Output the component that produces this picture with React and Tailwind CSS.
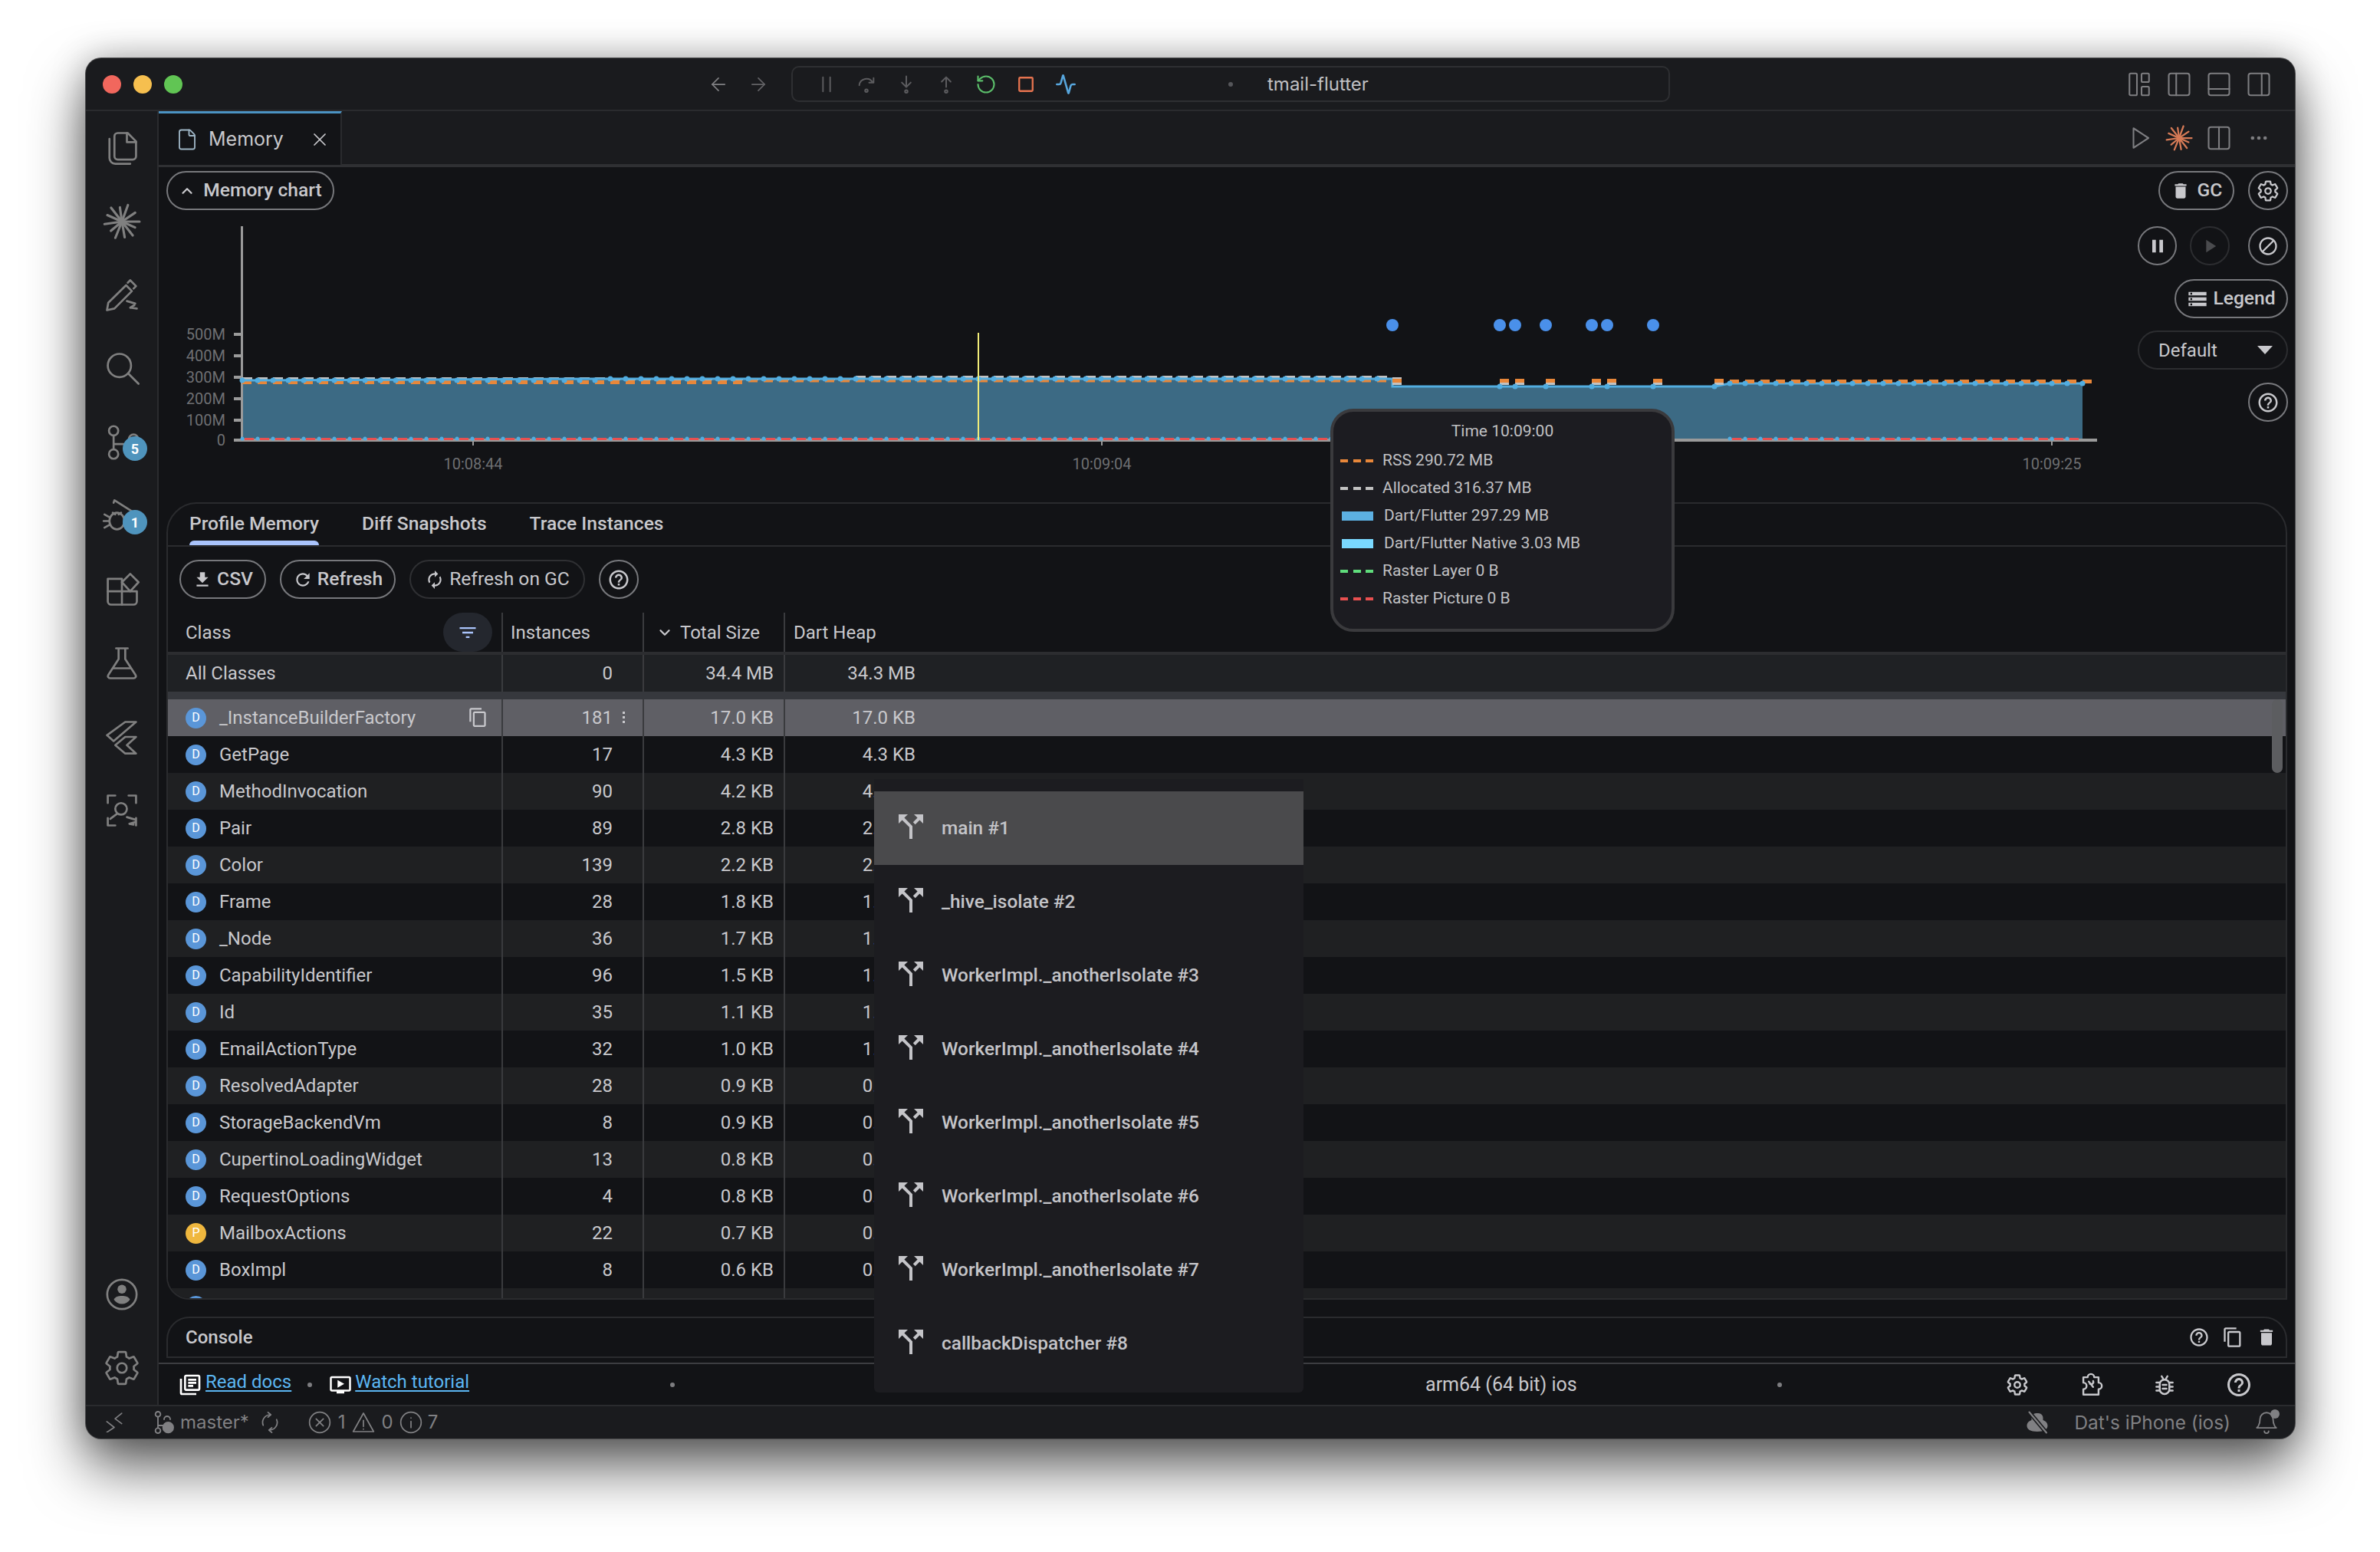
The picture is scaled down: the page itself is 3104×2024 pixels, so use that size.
import React from 'react';
import { ArrowLeft, ArrowRight, X, File, Activity, Ellipsis, ChevronUp, ChevronDown, RotateCcw } from 'lucide-react';

const HELP = "M11 18h2v-2h-2v2zm1-16C6.48 2 2 6.48 2 12s4.48 10 10 10 10-4.48 10-10S17.52 2 12 2zm0 18c-4.41 0-8-3.59-8-8s3.59-8 8-8 8 3.59 8 8-3.59 8-8 8zm0-14c-2.21 0-4 1.79-4 4h2c0-1.1.9-2 2-2s2 .9 2 2c0 2-3 1.75-3 5h2c0-2.25 3-2.5 3-5 0-2.21-1.79-4-4-4z";
const TRASH = "M6 19c0 1.1.9 2 2 2h8c1.1 0 2-.9 2-2V7H6v12zM19 4h-3.5l-1-1h-5l-1 1H5v2h14V4z";
const COPY = "M16 1H4c-1.1 0-2 .9-2 2v14h2V3h12V1zm3 4H8c-1.1 0-2 .9-2 2v14c0 1.1.9 2 2 2h11c1.1 0 2-.9 2-2V7c0-1.1-.9-2-2-2zm0 16H8V7h11v14z";
const STORAGE = "M2 20h20v-4H2v4zm2-3h2v2H4v-2zM2 4v4h20V4H2zm4 3H4V5h2v2zm-4 7h20v-4H2v4zm2-3h2v2H4v-2z";
const BLOCK = "M12 2C6.48 2 2 6.48 2 12s4.48 10 10 10 10-4.48 10-10S17.52 2 12 2zM4 12c0-4.42 3.58-8 8-8 1.85 0 3.55.63 4.9 1.69L5.69 16.9C4.63 15.55 4 13.85 4 12zm8 8c-1.85 0-3.55-.63-4.9-1.69L18.31 7.1C19.37 8.45 20 10.15 20 12c0 4.42-3.58 8-8 8z";
const PAUSE = "M6 19h4V5H6v14zm8-14v14h4V5h-4z";
const PLAY = "M8 5v14l11-7z";
const REFRESH = "M17.65 6.35C16.2 4.9 14.21 4 12 4c-4.42 0-7.99 3.58-7.99 8s3.57 8 7.99 8c3.73 0 6.84-2.55 7.73-6h-2.08c-.82 2.33-3.04 4-5.65 4-3.31 0-6-2.69-6-6s2.69-6 6-6c1.66 0 3.14.69 4.22 1.78L13 11h7V4l-2.35 2.35z";
const AUTORENEW = "M12 6v3l4-4-4-4v3c-4.42 0-8 3.58-8 8 0 1.57.46 3.03 1.24 4.26L6.7 14.8c-.45-.83-.7-1.79-.7-2.8 0-3.31 2.69-6 6-6zm6.76 1.74L17.3 9.2c.44.84.7 1.79.7 2.8 0 3.31-2.69 6-6 6v-3l-4 4 4 4v-3c4.42 0 8-3.58 8-8 0-1.57-.46-3.03-1.24-4.26z";
const DOWNLOAD = "M19 9h-4V3H9v6H5l7 7 7-7zM5 18v2h14v-2H5z";
const FILTER = "M10 18h4v-2h-4v2zM3 6v2h18V6H3zm3 7h12v-2H6v2z";
const SPLIT = "M14 4l2.29 2.29-2.88 2.88 1.42 1.42 2.88-2.88L20 10V4zm-4 0H4v6l2.29-2.29 4.71 4.7V20h2v-8.41l-5.29-5.3z";
const GEAR = "M19.43 12.98c.04-.32.07-.64.07-.98s-.03-.66-.07-.98l2.11-1.65c.19-.15.24-.42.12-.64l-2-3.46c-.12-.22-.39-.3-.61-.22l-2.49 1c-.52-.4-1.08-.73-1.69-.98l-.38-2.65C14.46 2.18 14.25 2 14 2h-4c-.25 0-.46.18-.49.42l-.38 2.65c-.61.25-1.17.59-1.69.98l-2.49-1c-.23-.09-.49 0-.61.22l-2 3.46c-.13.22-.07.49.12.64l2.11 1.65c-.04.32-.07.65-.07.98s.03.66.07.98l-2.11 1.65c-.19.15-.24.42-.12.64l2 3.46c.12.22.39.3.61.22l2.49-1c.52.4 1.08.73 1.69.98l.38 2.65c.03.24.24.42.49.42h4c.25 0 .46-.18.49-.42l.38-2.65c.61-.25 1.17-.59 1.69-.98l2.49 1c.23.09.49 0 .61-.22l2-3.46c.12-.22.07-.49-.12-.64l-2.11-1.65z";

const Mat = ({ d, size = 28, color = '#c8c8cc' }) => (
  <svg width={size} height={size} viewBox="0 0 24 24" fill={color} className="shrink-0"><path d={d} /></svg>
);

const Stroke = ({ size = 52, color = '#808080', sw = 1.25, children }) => (
  <svg width={size} height={size} viewBox="0 0 24 24" fill="none" stroke={color} strokeWidth={sw} strokeLinecap="round" strokeLinejoin="round" className="shrink-0">{children}</svg>
);

const Gear = ({ size = 30, color = '#c8c8cc', sw = 1.9 }) => (
  <Stroke size={size} color={color} sw={sw}><path d={GEAR} /><circle cx="12" cy="12" r="3" /></Stroke>
);

const Spark = ({ size = 50, color = '#808080' }) => {
  const rays = [[0, 11], [24, 9], [52, 11], [80, 10], [112, 11], [140, 9], [172, 11], [204, 10], [232, 11], [262, 9], [290, 11], [326, 10]];
  return (
    <svg width={size} height={size} viewBox="-12 -12 24 24" stroke={color} strokeWidth="1.5" strokeLinecap="round" className="shrink-0">
      {rays.map(([a, l]) => {
        const r = (a * Math.PI) / 180;
        return <line key={a} x1="0" y1="0" x2={Math.cos(r) * l} y2={Math.sin(r) * l} />;
      })}
    </svg>
  );
};

const PanelIcon = ({ kind }) => (
  <Stroke size={36} color="#7d7d80" sw={1.4}>
    {kind === 'grid' ? (
      <>
        <rect x="3.5" y="2.5" width="6.5" height="19" rx="1" />
        <rect x="14" y="2.5" width="6.5" height="7.5" rx="1" />
        <rect x="14" y="14" width="6.5" height="7.5" rx="1" />
      </>
    ) : (
      <>
        <rect x="3" y="2.5" width="18" height="19" rx="2" />
        {kind === 'left' && <line x1="9.5" y1="2.5" x2="9.5" y2="21.5" />}
        {kind === 'bottom' && <line x1="3" y1="16" x2="21" y2="16" />}
        {kind === 'right' && <line x1="14.5" y1="2.5" x2="14.5" y2="21.5" />}
        {kind === 'mid' && <line x1="12" y1="2.5" x2="12" y2="21.5" />}
      </>
    )}
  </Stroke>
);

const sideIcons = [
  <Stroke key="files"><path d="M9.5 3h6l5 5v9a2 2 0 0 1-2 2h-9a2 2 0 0 1-2-2V5a2 2 0 0 1 2-2z" /><path d="M15 3v5.5h5.5" /><path d="M4.500 6.500V18a3.500 3.500 0 0 0 3.500 3.500h9" /></Stroke>,
  <Spark key="spark" />,
  <Stroke key="pen"><path d="M3 21l.8-4.500L14.500 6l3.500 3.500L7.500 20z" /><path d="M15.500 4.500l1.500-1.500 3.500 3.500-1.500 1.500" /><path d="M15 15.500l5 1.500M17 19.500l4 .5M17 19.500l2.500-1.500" /></Stroke>,
  <Stroke key="search"><circle cx="10.500" cy="10" r="7" /><path d="M16 15l6 6" /></Stroke>,
  <Stroke key="git"><circle cx="7" cy="5" r="2.800" /><circle cx="7" cy="19" r="2.800" /><circle cx="19" cy="10" r="2.800" /><path d="M7 8v8M7 13h9" /></Stroke>,
  <Stroke key="debug"><path d="M7 4l.5-1.500L21 11" /><ellipse cx="9" cy="15" rx="4.500" ry="5" /><path d="M1.500 11l3.500 2M1.500 19l3.500-2M1 15h3.500M16.500 11L13 13M14 15h2M6.500 10l1.500 1M11.500 10l-1.500 1" /></Stroke>,
  <Stroke key="ext"><path d="M3.500 5.500h8.500v15.500H5.500a2 2 0 0 1-2-2z" /><path d="M3.500 13H21v6a2 2 0 0 1-2 2h-7" /><path d="M17 2.500l5 5-5 5.500-5-5.500z" /></Stroke>,
  <Stroke key="flask"><path d="M8.500 3h7M10 3v6.500L3.800 19a1.300 1.300 0 0 0 1.100 2h14.200a1.300 1.300 0 0 0 1.100-2L14 9.500V3" /><path d="M7 15h10" /></Stroke>,
  <Stroke key="flutter"><path d="M14 3h6.500L7 14.500 3 11z" /><path d="M14 12h6.500L15 17l5.500 5H14l-6-5z" /></Stroke>,
  <Stroke key="scan"><path d="M8 3H3.500v4.500M16 3h4.500v4.500M3.500 16.500V21H8M20.500 16.500V21" /><circle cx="11.500" cy="11" r="3.500" /><path d="M9 14l-4 3M15 16l5 1.500M16.500 20l3.500-1M16.500 20l2.500.5" /></Stroke>,
];

const rows = [
  ['_InstanceBuilderFactory', '181', '17.0 KB', '17.0 KB'],
  ['GetPage', '17', '4.3 KB', '4.3 KB'],
  ['MethodInvocation', '90', '4.2 KB', '4.2 KB'],
  ['Pair', '89', '2.8 KB', '2.8 KB'],
  ['Color', '139', '2.2 KB', '2.2 KB'],
  ['Frame', '28', '1.8 KB', '1.8 KB'],
  ['_Node', '36', '1.7 KB', '1.7 KB'],
  ['CapabilityIdentifier', '96', '1.5 KB', '1.5 KB'],
  ['Id', '35', '1.1 KB', '1.1 KB'],
  ['EmailActionType', '32', '1.0 KB', '1.0 KB'],
  ['ResolvedAdapter', '28', '0.9 KB', '0.9 KB'],
  ['StorageBackendVm', '8', '0.9 KB', '0.9 KB'],
  ['CupertinoLoadingWidget', '13', '0.8 KB', '0.8 KB'],
  ['RequestOptions', '4', '0.8 KB', '0.8 KB'],
  ['MailboxActions', '22', '0.7 KB', '0.7 KB'],
  ['BoxImpl', '8', '0.6 KB', '0.6 KB'],
];

const isolates = ['main #1', '_hive_isolate #2', 'WorkerImpl._anotherIsolate #3', 'WorkerImpl._anotherIsolate #4', 'WorkerImpl._anotherIsolate #5', 'WorkerImpl._anotherIsolate #6', 'WorkerImpl._anotherIsolate #7', 'callbackDispatcher #8'];

const legend = [
  ['RSS 290.72 MB', '#e8873a', true],
  ['Allocated 316.37 MB', '#c2c2c2', true],
  ['Dart/Flutter 297.29 MB', '#5cb0e2', false],
  ['Dart/Flutter Native 3.03 MB', '#7ad9ff', false],
  ['Raster Layer 0 B', '#5fdc7c', true],
  ['Raster Picture 0 B', '#e85050', true],
];

const Circle = ({ d, dim, size = 28, children }) => (
  <button className={`w-[52px] h-[51px] rounded-full border-2 flex items-center justify-center ${dim ? 'border-[#2c2d30]' : 'border-[#77787c]'}`}>
    {children || <Mat d={d} size={size} color={dim ? '#4a4b4e' : '#c8c8cc'} />}
  </button>
);

const Pill = ({ icon, children, className = '' }) => (
  <button className={`h-[51px] rounded-full border-2 border-[#77787c] flex items-center justify-center gap-[6px] text-[24.6px] font-medium text-[#c8c8cc] ${className}`}>
    {icon}{children}
  </button>
);

const Chart = () => {
  const seq = (from, to, step = 20) => {
    const out = [];
    for (let x = from; x <= to; x += step) out.push(x);
    return out;
  };
  const xs = seq(316, 1796);
  const late = seq(2256, 2716);
  const sparse = [1956, 1976, 2016, 2076, 2096, 2156, 2236];
  const blue = (x) => (x < 780 ? 496 : 494);
  const orange = (x) => (x < 975 ? 498 : 495.500);
  const gray = (x) => (x < 780 ? 492 : x < 1115 ? 493 : 490);
  const ticks = [[436, '500M'], [464, '400M'], [492, '300M'], [520, '200M'], [548, '100M'], [574, '0']];
  return (
    <svg width="2581" height="352" viewBox="207 280 2581 352" className="block">
      <path d="M316 496 L780 494 L1816 494 L1816 504 L2236 504 L2256 500 L2716 500 L2716 573 L316 573 Z" fill="#3c6a84" />
      <rect x="314" y="295" width="3" height="280" fill="#9a9a9a" />
      <rect x="305" y="572" width="2430" height="4" fill="#9a9a9a" />
      {ticks.map(([y, t]) => (
        <g key={t}>
          <rect x="305" y={y - 2} width="10" height="4" fill="#9a9a9a" />
          <text x="294" y={y + 7} textAnchor="end" fontFamily="Roboto" fontSize="20" fill="#6e6f72">{t}</text>
        </g>
      ))}
      {[[617, '10:08:44'], [1437, '10:09:04'], [2676, '10:09:25']].map(([x, t]) => (
        <g key={t}>
          <rect x={x - 1} y="576" width="2" height="5" fill="#9a9a9a" />
          <text x={x} y="612" textAnchor="middle" fontFamily="Roboto" fontSize="20" fill="#6e6f72">{t}</text>
        </g>
      ))}
      {xs.map((x) => <rect key={`g${x}`} x={x} y={gray(x)} width="13" height="3" fill="#c2c2c2" />)}
      {xs.map((x) => <rect key={`o${x}`} x={x} y={orange(x) - 2} width="12" height="5" fill="#e8873a" />)}
      <path d="M316 496 L780 494 L1816 494" stroke="#52ade0" strokeWidth="3" fill="none" />
      <path d="M1816 494 L1816 504 L2236 504 L2256 500 L2716 500" stroke="#52ade0" strokeWidth="3" fill="none" />
      {xs.map((x) => <circle key={`b${x}`} cx={x} cy={blue(x)} r="3.500" fill="#52ade0" />)}
      <rect x="1816" y="492" width="12" height="10" fill="#c2c2c2" />
      <rect x="1816" y="494" width="12" height="5" fill="#e8873a" />
      {sparse.map((x) => (
        <g key={x}>
          <rect x={x} y="494" width="12" height="5" fill="#e8873a" />
          <rect x={x} y="499" width="12" height="3" fill="#c2c2c2" />
          <circle cx={x} cy="504" r="3.500" fill="#52ade0" />
        </g>
      ))}
      {late.map((x) => (
        <g key={x}>
          <rect x={x} y="495" width="12" height="5" fill="#e8873a" />
          <circle cx={x} cy="500" r="3.500" fill="#52ade0" />
        </g>
      ))}
      {[...xs, ...late.slice(0, -1)].map((x) => (
        <g key={`r${x}`}>
          <rect x={x + 3} y="571" width="12" height="3" fill="#e85050" />
          <circle cx={x} cy="572" r="2.500" fill="#52ade0" />
        </g>
      ))}
      {[1816, 1956, 1976, 2016, 2076, 2096, 2156].map((x) => <circle key={`d${x}`} cx={x} cy="424" r="8" fill="#4a90ea" />)}
      <rect x="1275" y="434" width="2" height="140" fill="#f1ec78" />
    </svg>
  );
};

const Row = ({ row, i }) => {
  const selected = i === 0;
  const bg = selected ? 'bg-[#5f5f65]' : i % 2 === 1 ? 'bg-[#121316]' : 'bg-[#1f2022]';
  return (
    <div className={`h-[48px] flex items-center text-[24px] text-[#c8c8cc] ${bg}`}>
      <div className="w-[435px] h-full flex items-center pl-[23px] relative">
        <span className={`w-[27px] h-[27px] rounded-full flex items-center justify-center text-[16px] text-white ${row[0] === 'MailboxActions' ? 'bg-[#efb73e]' : 'bg-[#5a96d8]'}`}>{row[0] === 'MailboxActions' ? 'P' : 'D'}</span>
        <span className="ml-[17px]">{row[0]}</span>
        {selected && <span className="absolute right-[17px] top-[10px]"><Mat d={COPY} size={27} color="#c8c8cc" /></span>}
      </div>
      <div className="w-[184px] h-full flex items-center justify-end border-l-2 border-[#3a3b3e] pr-[39px] relative">
        {row[1]}
        {selected && <span className="absolute left-[156px] top-[16px] flex flex-col gap-[3px]"><i className="w-[3px] h-[3px] bg-[#c8c8cc] block" /><i className="w-[3px] h-[3px] bg-[#c8c8cc] block" /><i className="w-[3px] h-[3px] bg-[#c8c8cc] block" /></span>}
      </div>
      <div className="w-[184px] h-full flex items-center justify-end border-l-2 border-[#3a3b3e] pr-[13px]">{row[2]}</div>
      <div className="flex-1 h-full flex items-center border-l-2 border-[#3a3b3e]"><span className="w-[170px] text-right">{row[3]}</span></div>
    </div>
  );
};

export default function App() {
  return (
    <div className="w-[3104px] h-[2024px] bg-white overflow-hidden pl-[112px] pt-[76px] font-['Roboto',sans-serif]">
      <div className="relative w-[2881px] h-[1800px] rounded-[20px] bg-[#1a1b1e] shadow-[0_0_0_1px_#4c4c4e,0_38px_75px_rgba(0,0,0,0.62),0_0_45px_rgba(0,0,0,0.28)] flex flex-col overflow-hidden">
        {/* title bar */}
        <div className="h-[69px] shrink-0 border-b-2 border-[#2a2b2e] flex items-center">
          <div className="flex gap-[16px] pl-[22px]">
            <span className="w-[24px] h-[24px] rounded-full bg-[#f1675d]" />
            <span className="w-[24px] h-[24px] rounded-full bg-[#f6bf4f]" />
            <span className="w-[24px] h-[24px] rounded-full bg-[#61c554]" />
          </div>
          <div className="flex items-center ml-[685px] gap-[24px]">
            <ArrowLeft size={28} color="#808083" strokeWidth={1.500} />
            <ArrowRight size={28} color="#636366" strokeWidth={1.500} />
          </div>
          <div className="ml-[29px] w-[1146px] h-[47px] rounded-[10px] border-2 border-[#2e2f32] flex items-center pl-[30px] text-[#9b9b9e]">
            <div className="flex items-center gap-[24px]">
              <Stroke size={28} color="#5c5c5f" sw={1.700}><path d="M8 4v16M16 4v16" /></Stroke>
              <Stroke size={28} color="#5c5c5f" sw={1.700}><path d="M4 13a8 8 0 0 1 15-3M20 5v5h-5" /><circle cx="12" cy="19" r="1.500" /></Stroke>
              <Stroke size={28} color="#5c5c5f" sw={1.700}><path d="M12 3v11M7 10l5 5 5-5" /><circle cx="12" cy="20" r="1.500" /></Stroke>
              <Stroke size={28} color="#5c5c5f" sw={1.700}><path d="M12 15V4M7 9l5-5 5 5" /><circle cx="12" cy="20" r="1.500" /></Stroke>
              <RotateCcw size={28} color="#5bbd6a" strokeWidth={1.800} />
              <Stroke size={28} color="#e5734f" sw={2}><rect x="4.500" y="4.500" width="15" height="15" rx="1" /></Stroke>
              <Activity size={28} color="#57a6dd" strokeWidth={2.200} />
            </div>
            <span className="ml-[198px] w-[6px] h-[6px] rounded-full bg-[#55565a]" />
            <span className="ml-[45px] text-[24px] text-[#c0c0c3] font-['Inter',sans-serif]">tmail-flutter</span>
          </div>
          <div className="ml-auto pr-[29px] flex gap-[16px]">
            <PanelIcon kind="grid" />
            <PanelIcon kind="left" />
            <PanelIcon kind="bottom" />
            <PanelIcon kind="right" />
          </div>
        </div>

        <div className="flex-1 flex min-h-0">
          {/* activity bar */}
          <div className="w-[95px] shrink-0 border-r-2 border-[#2a2b2e] flex flex-col justify-between">
            <div>
              {sideIcons.map((icon, i) => (
                <div key={i} className="relative h-[96px] flex items-center justify-center">
                  {icon}
                  {i === 4 && <span className="absolute left-[48px] top-[40px] w-[32px] h-[32px] rounded-full bg-[#4f94bd] flex items-center justify-center text-[18px] font-bold text-white">5</span>}
                  {i === 5 && <span className="absolute left-[48px] top-[40px] w-[32px] h-[32px] rounded-full bg-[#4f94bd] flex items-center justify-center text-[18px] font-bold text-white">1</span>}
                </div>
              ))}
            </div>
            <div>
              <div className="h-[96px] flex items-center justify-center">
                <svg width="46" height="46" viewBox="0 0 24 24" className="shrink-0">
                  <circle cx="12" cy="12" r="10" fill="none" stroke="#808080" strokeWidth="1.400" />
                  <circle cx="12" cy="8.500" r="3" fill="#808080" />
                  <path d="M6.500 15.500c1-2 3-2.500 5.500-2.500s4.500.5 5.500 2.500a6.500 6.500 0 0 1-11 0z" fill="#808080" />
                </svg>
              </div>
              <div className="h-[96px] flex items-center justify-center"><Gear size={50} color="#808080" sw={1.300} /></div>
            </div>
          </div>

          {/* main */}
          <div className="flex-1 relative flex flex-col min-w-0 bg-[#121316]">
            <div className="h-[73px] shrink-0 bg-[#1a1b1e] border-b-4 border-[#2f3033] flex items-stretch">
              <div className="w-[239px] h-[70px] bg-[#131417] border-t-[3px] border-[#4b93c3] border-r-2 border-r-[#2a2b2e] flex items-center relative">
                <span className="ml-[22px]"><File size={30} color="#9db4c4" strokeWidth={1.500} /></span>
                <span className="ml-[13px] text-[25px] text-[#c8c8cc] font-['Inter',sans-serif]">Memory</span>
                <span className="absolute right-[13px] top-[20px]"><X size={28} color="#c8c8cc" strokeWidth={1.500} /></span>
              </div>
              <div className="ml-auto pr-[29px] flex items-center gap-[16px]">
                <Stroke size={36} color="#7d7d80" sw={1.400}><path d="M7 3.500l13 8.500-13 8.500z" /></Stroke>
                <Spark size={36} color="#d67a56" />
                <PanelIcon kind="mid" />
                <span className="w-[36px] flex justify-center"><Ellipsis size={28} color="#7d7d80" strokeWidth={2} /></span>
              </div>
            </div>

            {/* chart */}
            <div className="h-[438px] shrink-0 flex">
              <div className="w-[2581px] shrink-0 pt-[5px]">
                <Pill className="ml-[10px] w-[219px]" icon={<span className="mr-[4px]"><ChevronUp size={22} color="#c8c8cc" strokeWidth={2.500} /></span>}>Memory chart</Pill>
                <div className="pt-[6px]"><Chart /></div>
              </div>
              <div className="w-[196px] shrink-0 pt-[5px] flex flex-col items-end">
                <div className="flex gap-[18px]">
                  <Pill className="w-[99px]" icon={<span className="mr-[3px]"><Mat d={TRASH} size={26} /></span>}>GC</Pill>
                  <Circle><Gear size={30} color="#c8c8cc" sw={1.800} /></Circle>
                </div>
                <div className="mt-[21px] w-full flex">
                  <Circle d={PAUSE} />
                  <span className="ml-[17px]"><Circle d={PLAY} dim /></span>
                  <span className="ml-[24px]"><Circle d={BLOCK} /></span>
                </div>
                <Pill className="mt-[18px] w-[148px]" icon={<Mat d={STORAGE} size={28} />}>Legend</Pill>
                <div className="mt-[16px] w-full h-[51px] rounded-full border-2 border-[#2c2d30] flex items-center justify-between pl-[25px] pr-[18px] text-[24px] text-[#c8c8cc]">
                  Default
                  <span className="w-0 h-0 border-l-[10px] border-r-[10px] border-t-[11px] border-l-transparent border-r-transparent border-t-[#c8c8cc]" />
                </div>
                <div className="mt-[17px]"><Circle d={HELP} size={30} /></div>
              </div>
            </div>

            {/* profile panel */}
            <div className="-mt-[1px] ml-[10px] mr-[10px] h-[1040px] shrink-0 border-2 border-[#2a2b2e] rounded-t-[40px] rounded-bl-[30px] overflow-hidden flex flex-col">
              <div className="h-[56px] shrink-0 border-b-2 border-[#2a2b2e] flex pl-[28px] gap-[56px] text-[24.6px] font-medium text-[#c8c8cc]">
                <div className="relative h-full flex items-center -mt-[1px]"><span>Profile Memory</span><span className="absolute left-0 right-0 bottom-[-1px] h-[6px] rounded-t-[6px] bg-[#a9c3fb]" /></div>
                <div className="h-full flex items-center -mt-[1px]">Diff Snapshots</div>
                <div className="h-full flex items-center -mt-[1px]">Trace Instances</div>
              </div>
              <div className="h-[86px] shrink-0 pt-[17px] pl-[15px] flex gap-[18px] text-[#c8c8cc]">
                <Pill className="w-[113px]" icon={<Mat d={DOWNLOAD} size={26} />}>CSV</Pill>
                <Pill className="w-[151px]" icon={<Mat d={REFRESH} size={26} />}>Refresh</Pill>
                <button className="w-[229px] h-[51px] rounded-full border-2 border-[#2f3033] flex items-center justify-center gap-[6px] text-[24.6px]"><Mat d={AUTORENEW} size={26} />Refresh on GC</button>
                <Circle d={HELP} size={30} />
              </div>
              <div className="h-[55px] shrink-0 flex items-center text-[24px] text-[#c8c8cc] border-b-4 border-[#2c2d30]">
                <div className="w-[435px] h-full flex items-center pl-[23px] relative">
                  Class
                  <span className="absolute left-[359px] top-0 w-[64px] h-[51px] rounded-full bg-[#24272e] flex items-center justify-center"><Mat d={FILTER} size={28} color="#a9c3fb" /></span>
                </div>
                <div className="w-[184px] h-full flex items-center border-l-2 border-[#3a3b3e] pl-[10px]">Instances</div>
                <div className="w-[184px] h-full flex items-center border-l-2 border-[#3a3b3e] pl-[16px] gap-[9px]"><ChevronDown size={22} color="#c8c8cc" strokeWidth={2.500} />Total Size</div>
                <div className="flex-1 h-full flex items-center border-l-2 border-[#3a3b3e] pl-[11px]">Dart Heap</div>
              </div>
              <div className="h-[48px] shrink-0 bg-[#1f2124] flex items-center text-[24px] text-[#c8c8cc]">
                <div className="w-[435px] h-full flex items-center pl-[23px]">All Classes</div>
                <div className="w-[184px] h-full flex items-center justify-end border-l-2 border-[#3a3b3e] pr-[39px]">0</div>
                <div className="w-[184px] h-full flex items-center justify-end border-l-2 border-[#3a3b3e] pr-[13px]">34.4 MB</div>
                <div className="flex-1 h-full flex items-center border-l-2 border-[#3a3b3e]"><span className="w-[170px] text-right">34.3 MB</span></div>
              </div>
              <div className="h-[10px] shrink-0 bg-[#36383d]" />
              <div className="relative flex-1 overflow-hidden">
                {rows.map((r, i) => <Row key={r[0]} row={r} i={i} />)}
                <div className="h-[48px] bg-[#1f2022] flex">
                  <div className="w-[435px] h-full pl-[23px] pt-[10px]"><span className="block w-[27px] h-[27px] rounded-full bg-[#5a96d8]" /></div>
                  <div className="w-[184px] h-full border-l-2 border-[#3a3b3e]" />
                  <div className="w-[184px] h-full border-l-2 border-[#3a3b3e]" />
                  <div className="flex-1 h-full border-l-2 border-[#3a3b3e]" />
                </div>
                <span className="absolute right-[4px] top-0 w-[14px] h-[96px] rounded-full bg-[#5c5d60]" />
              </div>
            </div>

            {/* console */}
            <div className="mt-[22px] ml-[10px] mr-[10px] h-[54px] shrink-0 border-2 border-b-2 border-[#2a2b2e] rounded-t-[30px] flex items-center pl-[23px] pr-[11px] text-[24px] font-medium text-[#c8c8cc]">
              Console
              <div className="ml-auto flex items-center gap-[16px]">
                <Mat d={HELP} size={28} />
                <Mat d={COPY} size={28} />
                <Mat d={TRASH} size={28} />
              </div>
            </div>

            {/* footer */}
            <div className="mt-[6px] flex-1 border-t-2 border-[#3c3d41] flex items-center text-[24px] relative">
              <svg width="32" height="32" viewBox="0 0 24 24" fill="#ffffff" className="ml-[25px] shrink-0"><path d="M4 6H2v14c0 1.100.9 2 2 2h14v-2H4V6z" /><path d="M20 2H8c-1.100 0-2 .9-2 2v12c0 1.100.9 2 2 2h12c1.100 0 2-.9 2-2V4c0-1.100-.9-2-2-2zm0 14H8V4h12v12zM10 6h8v2h-8zm0 3h8v2h-8zm0 3h5v2h-5z" /></svg>
              <a className="ml-[4px] text-[#5bb6f2] underline underline-offset-3 -mt-[8px]">Read docs</a>
              <span className="ml-[21px] w-[6px] h-[6px] rounded-full bg-[#7d7d80]" />
              <svg width="30" height="30" viewBox="0 0 24 24" fill="#ffffff" className="ml-[22px] shrink-0"><path d="M21 3H3c-1.100 0-2 .9-2 2v12c0 1.100.9 2 2 2h5v2h8v-2h5c1.100 0 2-.9 2-2V5c0-1.100-.9-2-2-2zm0 14H3V5h18v12zm-5-6l-7 4V7z" /></svg>
              <a className="ml-[4px] text-[#5bb6f2] underline underline-offset-3 -mt-[8px]">Watch tutorial</a>
              <span className="ml-[262px] w-[6px] h-[6px] rounded-full bg-[#7d7d80]" />
              <span className="ml-[285px] w-[6px] h-[6px] rounded-full bg-white" />
              <span className="ml-[688px] text-[25px] text-[#c8c8cc]">arm64 (64 bit) ios</span>
              <span className="ml-[261px] w-[6px] h-[6px] rounded-full bg-[#7d7d80]" />
              <div className="ml-auto pr-[55px] flex items-center gap-[64px]">
                <Gear size={30} color="#c8c8cc" sw={1.900} />
                <Stroke size={34} color="#c8c8cc" sw={1.700}><path d="M9 5a3 3 0 0 1 6 0h4v5a3 3 0 0 1 0 6v5H5v-5a3 3 0 0 0 0-6V5z" /><path d="M10 9l4 5M14 8.500a2 2 0 0 1-3 2.500" /></Stroke>
                <Stroke size={30} color="#c8c8cc" sw={2}><rect x="7" y="6.500" width="10" height="15" rx="5" /><path d="M9 3l2 3.500M15 3l-2 3.500M3.500 9.500H7M3.500 14H7M3.500 18H7M17 9.500h3.500M17 14h3.500M17 18h3.500M10 12h4M10 16h4" /></Stroke>
                <Mat d={HELP} size={36} />
              </div>
            </div>
          </div>
        </div>

        {/* status bar */}
        <div className="h-[44px] shrink-0 border-t-2 border-[#2a2b2e] flex items-center text-[24px] text-[#808083] font-['Inter',sans-serif]">
          <span className="ml-[24px]"><Stroke size={26} color="#808083" sw={1.500}><path d="M3 11l9 7-9 6M21 1l-8 6.500 8 6" /></Stroke></span>
          <span className="ml-[36px]"><Stroke size={32} color="#808083" sw={1.400}><circle cx="6" cy="4" r="2.500" /><circle cx="6" cy="20" r="2.500" /><path d="M6 6.500v11M6 15h5" /><path d="M12 9a3 3 0 0 1 6 0" /><circle cx="16" cy="17" r="5" fill="#808083" /></Stroke></span>
          <span className="ml-[5px]">master*</span>
          <span className="ml-[12px]"><Stroke size={30} color="#808083" sw={1.400}><path d="M5 15a8 8 0 0 1 7-11M19 9a8 8 0 0 1-7 11" /><path d="M10 1.500l3 2.500-3 2.500M14 17.500l-3 2.500 3 2.500" /></Stroke></span>
          <span className="ml-[34px]"><Stroke size={32} color="#808083" sw={1.300}><circle cx="12" cy="12" r="10" /><path d="M8.500 8.500l7 7M15.500 8.500l-7 7" /></Stroke></span>
          <span className="ml-[8px]">1</span>
          <span className="ml-[7px]"><Stroke size={32} color="#808083" sw={1.300}><path d="M12 3l10 18H2z" /><path d="M12 10v6M12 18.500v.1" /></Stroke></span>
          <span className="ml-[8px]">0</span>
          <span className="ml-[7px]"><Stroke size={32} color="#808083" sw={1.300}><circle cx="12" cy="12" r="10" /><path d="M12 11v6M12 7.500v.1" /></Stroke></span>
          <span className="ml-[6px]">7</span>
          <div className="ml-auto flex items-center pr-[20px]">
            <Stroke size={36} color="#808083" sw={1.400}><path d="M7 8a4 4 0 0 1 4-4h2a4 4 0 0 1 4 4v2c3 1 4 3 4 5 0 3-3 5-9 5s-9-2-9-5c0-2 1-4 4-5z" fill="#808083" stroke="none" /><path d="M5 3l15 18" stroke="#1a1b1e" strokeWidth="3.500" /><path d="M5 3l15 18" /></Stroke>
            <span className="ml-[30px] text-[24.4px]">Dat's iPhone (ios)</span>
            <span className="ml-[30px] relative">
              <Stroke size={34} color="#808083" sw={1.300}><path d="M18 9a6 6 0 0 0-12 0c0 6-3 8-3 8h18s-3-2-3-8" /><path d="M10 20a2 2 0 0 0 4 0" /></Stroke>
              <span className="absolute right-0 top-0 w-[12px] h-[12px] rounded-full bg-[#808083]" />
            </span>
          </div>
        </div>

        {/* tooltip over chart */}
        <div className="absolute left-[1623px] top-[457px] w-[449px] h-[291px] rounded-[30px] bg-[#1c1c21] border-4 border-[#3a3a3d] text-[21px] text-[#c0c0c3] pt-[8px]">
          <div className="h-[36px] mb-[2px] flex items-center justify-center">Time 10:09:00</div>
          {legend.map(([label, color, dashed]) => (
            <div key={label} className="h-[36px] flex items-center pl-[9px]">
              {dashed ? (
                <span className="w-[43px] flex justify-between">
                  <i className="block w-[10px] h-[4px]" style={{ background: color }} />
                  <i className="block w-[10px] h-[4px]" style={{ background: color }} />
                  <i className="block w-[10px] h-[4px]" style={{ background: color }} />
                </span>
              ) : (
                <span className="ml-[2px] w-[41px] h-[12px]" style={{ background: color }} />
              )}
              <span className={dashed ? 'ml-[12px]' : 'ml-[14px]'}>{label}</span>
            </div>
          ))}
        </div>

        {/* isolate menu */}
        <div className="absolute left-[1028px] top-[940px] w-[560px] py-[16px] bg-[#1c1c20] rounded-b-[6px] text-[24.4px] font-medium text-[#c4c4c8]">
          {isolates.map((name, i) => (
            <div key={name} className={`h-[96px] flex items-center pl-[24px] ${i === 0 ? 'bg-[#4a4a4c]' : ''}`}>
              <span className="-mt-[4px] mr-[16px]"><Mat d={SPLIT} size={48} color="#c4c4c8" /></span>
              <span>{name}</span>
            </div>
          ))}
        </div>
      </div>
    </div>
  );
}
